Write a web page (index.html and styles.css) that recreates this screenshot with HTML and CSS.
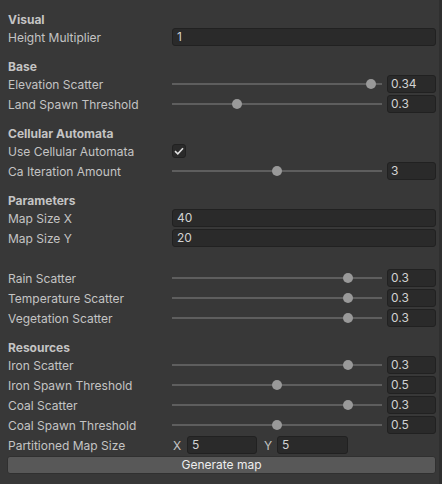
FILE: index.html
```html
<!DOCTYPE html>
<html>
<head>
<meta charset="utf-8">
<link rel="stylesheet" href="styles.css">
</head>
<body>
<div class="inspector">
  <div class="header">Visual</div>
  <div class="row"><span class="label">Height Multiplier</span><div class="value"><div class="field">1</div></div></div>

  <div class="header">Base</div>
  <div class="row"><span class="label">Elevation Scatter</span><div class="value slider"><div class="track"><div class="rail"><span class="thumb" style="left:97%"></span></div></div><div class="field num">0.34</div></div></div>
  <div class="row"><span class="label">Land Spawn Threshold</span><div class="value slider"><div class="track"><div class="rail"><span class="thumb" style="left:30%"></span></div></div><div class="field num">0.3</div></div></div>

  <div class="header">Cellular Automata</div>
  <div class="row"><span class="label">Use Cellular Automata</span><div class="value"><span class="checkbox"><svg width="10" height="8" viewBox="0 0 10 8"><path d="M1 4.2 L3.8 6.8 L9 1.2" fill="none" stroke="#e0e0e0" stroke-width="1.6"/></svg></span></div></div>
  <div class="row"><span class="label">Ca Iteration Amount</span><div class="value slider"><div class="track"><div class="rail"><span class="thumb" style="left:50%"></span></div></div><div class="field num">3</div></div></div>

  <div class="header">Parameters</div>
  <div class="row"><span class="label">Map Size X</span><div class="value"><div class="field">40</div></div></div>
  <div class="row"><span class="label">Map Size Y</span><div class="value"><div class="field">20</div></div></div>

  <div class="spacer"></div>
  <div class="row"><span class="label">Rain Scatter</span><div class="value slider"><div class="track"><div class="rail"><span class="thumb" style="left:85.5%"></span></div></div><div class="field num">0.3</div></div></div>
  <div class="row"><span class="label">Temperature Scatter</span><div class="value slider"><div class="track"><div class="rail"><span class="thumb" style="left:85.5%"></span></div></div><div class="field num">0.3</div></div></div>
  <div class="row"><span class="label">Vegetation Scatter</span><div class="value slider"><div class="track"><div class="rail"><span class="thumb" style="left:85.5%"></span></div></div><div class="field num">0.3</div></div></div>

  <div class="header">Resources</div>
  <div class="row"><span class="label">Iron Scatter</span><div class="value slider"><div class="track"><div class="rail"><span class="thumb" style="left:85.5%"></span></div></div><div class="field num">0.3</div></div></div>
  <div class="row"><span class="label">Iron Spawn Threshold</span><div class="value slider"><div class="track"><div class="rail"><span class="thumb" style="left:50%"></span></div></div><div class="field num">0.5</div></div></div>
  <div class="row"><span class="label">Coal Scatter</span><div class="value slider"><div class="track"><div class="rail"><span class="thumb" style="left:85.5%"></span></div></div><div class="field num">0.3</div></div></div>
  <div class="row"><span class="label">Coal Spawn Threshold</span><div class="value slider"><div class="track"><div class="rail"><span class="thumb" style="left:50%"></span></div></div><div class="field num">0.5</div></div></div>
  <div class="row"><span class="label">Partitioned Map Size</span><div class="value vec"><span class="axis">X</span><div class="field vf">5</div><span class="axis ay">Y</span><div class="field vf">5</div></div></div>
  <div class="btnrow"><button class="button">Generate map</button></div>
</div>
</body>
</html>
```
FILE: styles.css
```css
html, body {
  margin: 0;
  padding: 0;
  background: #383838;
  height: 100%;
}
body {
  font-family: Inter, "Noto Sans", sans-serif;
  font-size: 12px;
  color: #c4c4c4;
  border-right: 3px solid #2f2f2f;
  box-sizing: border-box;
}
.inspector {
  padding: 0 3px 0 7px;
  display: flex;
  flex-direction: column;
}
.header {
  height: 27px;
  display: flex;
  align-items: flex-end;
  font-weight: 700;
  line-height: 14px;
  padding-left: 1px;
}
.spacer { height: 20px; }
.row {
  height: 20px;
  display: flex;
  align-items: center;
}
.label {
  width: 165px;
  flex: none;
  padding-left: 1px;
  box-sizing: border-box;
  white-space: nowrap;
}
.value {
  flex: 1;
  display: flex;
  align-items: center;
  height: 18px;
}
.field {
  height: 18px;
  box-sizing: border-box;
  background: #2a2a2a;
  border: 1px solid #212121;
  border-radius: 3px;
  color: #d2d2d2;
  padding-left: 4px;
  line-height: 16px;
  flex: 1;
}
.slider { gap: 5px; }
.track {
  width: 210px;
  flex: none;
  height: 18px;
  padding: 0 5px;
  box-sizing: border-box;
  display: flex;
  align-items: center;
  position: relative;
}
.track::before {
  content: "";
  position: absolute;
  left: 0;
  right: 0;
  top: 8px;
  height: 2px;
  background: #5e5e5e;
}
.rail {
  position: relative;
  width: 100%;
  height: 2px;
}
.thumb {
  position: absolute;
  top: 50%;
  width: 10px;
  height: 10px;
  margin: -5px 0 0 -5px;
  border-radius: 50%;
  background: #999999;
}
.num {
  width: 49px;
  flex: none;
  padding-left: 3px;
}
.checkbox {
  width: 14px;
  height: 14px;
  box-sizing: border-box;
  background: #2a2a2a;
  border: 1px solid #212121;
  border-radius: 3px;
  display: flex;
  align-items: center;
  justify-content: center;
}
.checkbox svg { display: block; }
.axis {
  width: 15px;
  flex: none;
  padding-left: 1px;
  box-sizing: border-box;
  color: #c4c4c4;
}
.ay {
  margin-left: 7px;
  width: 13px;
  padding-left: 0;
}
.vf {
  flex: none;
  width: 70px;
}
.vf:last-child { width: 71px; }
.btnrow {
  height: 20px;
  display: flex;
  align-items: center;
}
.button {
  width: 100%;
  height: 18px;
  margin: 0;
  padding: 0;
  background: #585858;
  border: 1px solid #303030;
  border-radius: 3px;
  color: #eeeeee;
  font-family: Inter, "Noto Sans", sans-serif;
  font-size: 12px;
  line-height: 16px;
}
```
